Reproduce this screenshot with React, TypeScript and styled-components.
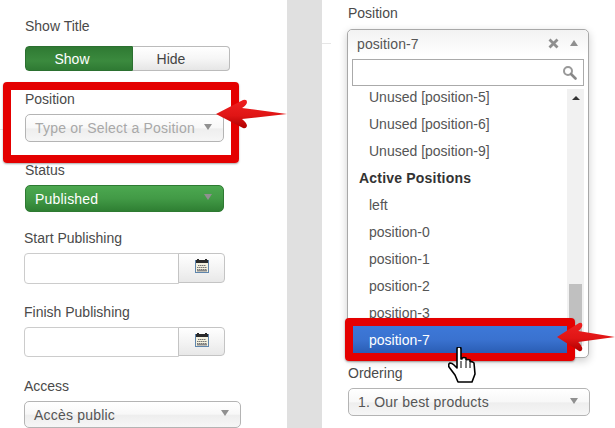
import React from 'react'
import styled, { createGlobalStyle } from 'styled-components'

const GlobalStyle = createGlobalStyle`
  html, body {
    margin: 0;
    padding: 0;
    background: #fff;
    overflow: hidden;
  }
  * {
    box-sizing: border-box;
  }
`

const Page = styled.div`
  display: grid;
  grid-template-columns: 287px 35px 293px;
  width: 615px;
  height: 428px;
  overflow: hidden;
  font-family: "Liberation Sans", Arial, sans-serif;
  font-size: 14px;
  color: #4a4a4a;
`

const LeftColumn = styled.div`
  position: relative;
  padding: 17px 0 0 24px;
  background: linear-gradient(#e6e6e6, #e6e6e6) 0 129px / 3px 1px no-repeat;
`

const Gutter = styled.div`
  background: #e0e0e0;
`

const RightColumn = styled.div`
  position: relative;
  padding: 4px 0 0 25px;
  background: linear-gradient(#e6e6e6, #e6e6e6) 0 43px / 9px 1px no-repeat;
`

const Field = styled.div<{ $after: number; $inset?: number }>`
  position: relative;
  margin-bottom: ${p => p.$after}px;
  margin-left: ${p => p.$inset ?? 0}px;
`

const Label = styled.div<{ $gap?: number; $inset?: number }>`
  height: 18px;
  line-height: 18px;
  margin-bottom: ${p => p.$gap ?? 6}px;
  margin-left: ${p => p.$inset ?? 0}px;
`

const Toggle = styled.div`
  display: flex;
  width: 205px;
  height: 25px;
`

const ToggleOn = styled.div`
  width: 108px;
  display: flex;
  align-items: center;
  justify-content: center;
  padding-right: 14px;
  color: #fff;
  border-radius: 4px 0 0 4px;
  background: linear-gradient(#2f7a33, #3b8a3e 60%, #2f7a33);
  border: 1px solid #2b7030;
`

const ToggleOff = styled.div`
  flex: 1;
  display: flex;
  align-items: center;
  justify-content: center;
  padding-right: 20px;
  color: #444;
  border: 1px solid #bbb;
  border-left: none;
  border-radius: 0 4px 4px 0;
  background: linear-gradient(#fff, #f6f6f6 50%, #e6e6e6);
`

const Select = styled.div<{ $width: number; $height: number; $tone?: 'muted' | 'green'; $inset?: number }>`
  display: flex;
  align-items: center;
  justify-content: space-between;
  width: ${p => p.$width}px;
  height: ${p => p.$height}px;
  margin-left: ${p => p.$inset ?? 0}px;
  padding: 0 11px 0 9px;
  letter-spacing: 0.2px;
  border-radius: 5px;
  border: 1px solid ${p => (p.$tone === 'green' ? '#2e7a32' : '#b4b4b4')};
  color: ${p => (p.$tone === 'green' ? '#fff' : p.$tone === 'muted' ? '#a8a8a8' : '#555')};
  background: ${p =>
    p.$tone === 'green'
      ? 'linear-gradient(#4ca850, #429a46 50%, #2f7f33)'
      : 'linear-gradient(#fff, #f8f8f8 48%, #eeeeee 54%, #f6f6f6)'};
`

const Caret = styled.span<{ $up?: boolean }>`
  width: 0;
  height: 0;
  margin-bottom: 3px;
  border-left: 4px solid transparent;
  border-right: 4px solid transparent;
  ${p => (p.$up ? 'border-bottom' : 'border-top')}: 6px solid #909090;
`

const DateRow = styled.div<{ $height: number }>`
  display: flex;
  width: 201px;
  height: ${p => p.$height}px;
`

const DateInput = styled.div`
  width: 155px;
  border: 1px solid #ccc;
  border-radius: 4px 0 0 4px;
  background: #fff;
`

const DateButton = styled.div`
  flex: 1;
  margin-left: -1px;
  height: calc(100% - 1px);
  display: flex;
  align-items: center;
  justify-content: center;
  padding-bottom: 4px;
  border: 1px solid #c4c4c4;
  border-radius: 0 4px 4px 0;
  background: linear-gradient(#fff, #f4f4f4 50%, #e8e8e8);
`

const RedFrame = styled.div<{ $top: number; $left: number; $width: number; $height: number }>`
  position: absolute;
  top: ${p => p.$top}px;
  left: ${p => p.$left}px;
  width: ${p => p.$width}px;
  height: ${p => p.$height}px;
  border: 8px solid #e40000;
  border-radius: 4px;
  box-shadow: 0 1px 2px rgba(0, 0, 0, 0.35);
  pointer-events: none;
`

const Overlay = styled.svg<{ $top: number; $left: number }>`
  position: absolute;
  top: ${p => p.$top}px;
  left: ${p => p.$left}px;
`

const Dropdown = styled.div`
  position: relative;
  width: 242px;
  height: 329px;
  margin-bottom: 6px;
  border: 1px solid #a8a8a8;
  border-radius: 5px;
  background: #fff;
  box-shadow: 0 3px 8px rgba(0, 0, 0, 0.2);
`

const DropdownHead = styled.div`
  display: flex;
  align-items: center;
  height: 26px;
  padding: 2px 10px 0 9px;
  border-radius: 5px 5px 0 0;
  background: linear-gradient(#f2f2f2, #fff);
  color: #555;
  letter-spacing: 0.1px;
`

const HeadValue = styled.span`
  flex: 1;
`

const HeadClear = styled.svg`
  margin: 0 11px 2px 0;
`

const SearchBox = styled.div`
  display: flex;
  align-items: center;
  justify-content: flex-end;
  height: 27px;
  margin: 3px 4px 3px 4px;
  padding-right: 6px;
  border: 1px solid #aaa;
`

const ListArea = styled.div`
  display: flex;
  align-items: flex-start;
  margin-left: 5px;
`

const List = styled.div`
  width: 214px;
`

const Row = styled.div<{ $selected?: boolean }>`
  position: relative;
  z-index: ${p => (p.$selected ? 2 : 'auto')};
  display: flex;
  align-items: center;
  height: 27px;
  padding: 1px 0 0 16px;
  color: ${p => (p.$selected ? '#fff' : '#555')};
  background: ${p => (p.$selected ? 'linear-gradient(#3d78d8, #3a72d0 50%, #2a5db4)' : 'transparent')};

  &:first-child {
    margin-top: -6px;
  }
`

const GroupRow = styled(Row)`
  padding-left: 6px;
  font-weight: bold;
  letter-spacing: 0.2px;
  color: #333;
`

const Scrollbar = styled.div`
  position: relative;
  width: 17px;
  height: 257px;
  background: #f1f1f1;
`

const ScrollCaret = styled.span`
  position: absolute;
  top: 7px;
  left: 5px;
  border-left: 4px solid transparent;
  border-right: 4px solid transparent;
  border-bottom: 4px solid #333;
`

const ScrollThumb = styled.div`
  position: absolute;
  top: 195px;
  left: 2px;
  width: 13px;
  height: 62px;
  background: #c0c0c0;
`

const CalendarIcon = () => (
  <svg width="14" height="14" viewBox="0 0 14 14">
    <rect x="0.5" y="1.5" width="13" height="12" fill="#f4f1df" stroke="#5f86ad" />
    <rect x="1" y="1" width="12" height="3" fill="#2a2a2a" />
    <rect x="2" y="0" width="2" height="2" fill="#2a2a2a" />
    <rect x="10" y="0" width="2" height="2" fill="#2a2a2a" />
    <path
      d="M3 6.5 H11 M2 8.5 H12 M2 10.5 H12"
      stroke="#777"
      strokeWidth="1"
      strokeDasharray="1.5 0.5"
      fill="none"
    />
    <rect x="2" y="11" width="10" height="1.5" fill="#8a8a8a" />
  </svg>
)

const ClearIcon = () => (
  <HeadClear width="11" height="11" viewBox="0 0 11 11">
    <path d="M1.5 1.5 L9.5 9.5 M9.5 1.5 L1.5 9.5" stroke="#8f8f8f" strokeWidth="2.8" fill="none" />
  </HeadClear>
)

const SearchIcon = () => (
  <svg width="15" height="15" viewBox="0 0 15 15">
    <circle cx="6" cy="6" r="4" fill="none" stroke="#999" strokeWidth="2" />
    <path d="M9 9 L13.5 13.5" stroke="#888" strokeWidth="2.6" strokeLinecap="round" />
  </svg>
)

const RedArrow = ({ id, top, left, width }: { id: string; top: number; left: number; width: number }) => (
  <Overlay $top={top} $left={left} width={width} height="32" viewBox="0 0 71 32" preserveAspectRatio="none">
    <defs>
      <linearGradient id={id} x1="0" y1="0" x2="0" y2="1">
        <stop offset="0" stopColor="#ee2020" />
        <stop offset="0.55" stopColor="#e01515" />
        <stop offset="1" stopColor="#b00000" />
      </linearGradient>
    </defs>
    <path
      d="M0 16 L27 2 Q31 1 31 4 Q31 7 26 10 L71 16 L26 21 Q31 25 31 28 Q30 31 27 30 Z"
      fill={`url(#${id})`}
    />
  </Overlay>
)

const HandCursor = () => (
  <Overlay $top={21} $left={95} width="28" height="36" viewBox="0 0 28 36">
    <path
      d="M9 2 Q9 0 11 0 Q13 0 13 2 L13 12 L14 12 L14 11 Q16 10 18 11 L18 13 Q20 12 22 13 L22 15 Q24 14 26 16 L27 27 L24 35 L10 35 L7 28 L1 20 Q0 17 2 16 Q4 16 6 18 L9 21 Z"
      fill="#fff"
      stroke="#000"
      strokeWidth="1.6"
      strokeLinejoin="round"
    />
    <path d="M13 14 L13 21 M18 14 L18 21 M22 16 L22 21" stroke="#000" strokeWidth="1" fill="none" />
  </Overlay>
)

const unused = ['Unused [position-5]', 'Unused [position-6]', 'Unused [position-9]']
const active = ['left', 'position-0', 'position-1', 'position-2', 'position-3']

export default function App() {
  return (
    <Page>
      <GlobalStyle />
      <LeftColumn>
        <Field $after={19} $inset={1}>
          <Label $gap={11}>Show Title</Label>
          <Toggle>
            <ToggleOn>Show</ToggleOn>
            <ToggleOff>Hide</ToggleOff>
          </Toggle>
        </Field>
        <Field $after={19} $inset={1}>
          <Label>Position</Label>
          <Select $width={199} $height={28} $tone="muted">
            Type or Select a Position
            <Caret />
          </Select>
          <RedFrame $top={-8} $left={-22} $width={236} $height={81} />
          <RedArrow id="arrowLeft" top={8} left={191} width={71} />
        </Field>
        <Field $after={17} $inset={1}>
          <Label>Status</Label>
          <Select $width={199} $height={27} $tone="green">
            Published
            <Caret />
          </Select>
        </Field>
        <Field $after={19}>
          <Label>Start Publishing</Label>
          <DateRow $height={31}>
            <DateInput />
            <DateButton>
              <CalendarIcon />
            </DateButton>
          </DateRow>
        </Field>
        <Field $after={20}>
          <Label>Finish Publishing</Label>
          <DateRow $height={30}>
            <DateInput />
            <DateButton>
              <CalendarIcon />
            </DateButton>
          </DateRow>
        </Field>
        <Field $after={0}>
          <Label>Access</Label>
          <Select $width={217} $height={27}>
            Accès public
            <Caret />
          </Select>
        </Field>
      </LeftColumn>
      <Gutter />
      <RightColumn>
        <Label $gap={7} $inset={1}>Position</Label>
        <Dropdown>
          <DropdownHead>
            <HeadValue>position-7</HeadValue>
            <ClearIcon />
            <Caret $up />
          </DropdownHead>
          <SearchBox>
            <SearchIcon />
          </SearchBox>
          <ListArea>
            <List>
              {unused.map(name => (
                <Row key={name}>{name}</Row>
              ))}
              <GroupRow>Active Positions</GroupRow>
              {active.map(name => (
                <Row key={name}>{name}</Row>
              ))}
              <Row $selected>
                position-7
                <RedFrame $top={-8} $left={-8} $width={230} $height={43} />
                <HandCursor />
                <RedArrow id="arrowRight" top={-5} left={204} width={58} />
              </Row>
            </List>
            <Scrollbar>
              <ScrollCaret />
              <ScrollThumb />
            </Scrollbar>
          </ListArea>
        </Dropdown>
        <Label $inset={1}>Ordering</Label>
        <Select $width={242} $height={28} $inset={1}>
          1. Our best products
          <Caret />
        </Select>
      </RightColumn>
    </Page>
  )
}
